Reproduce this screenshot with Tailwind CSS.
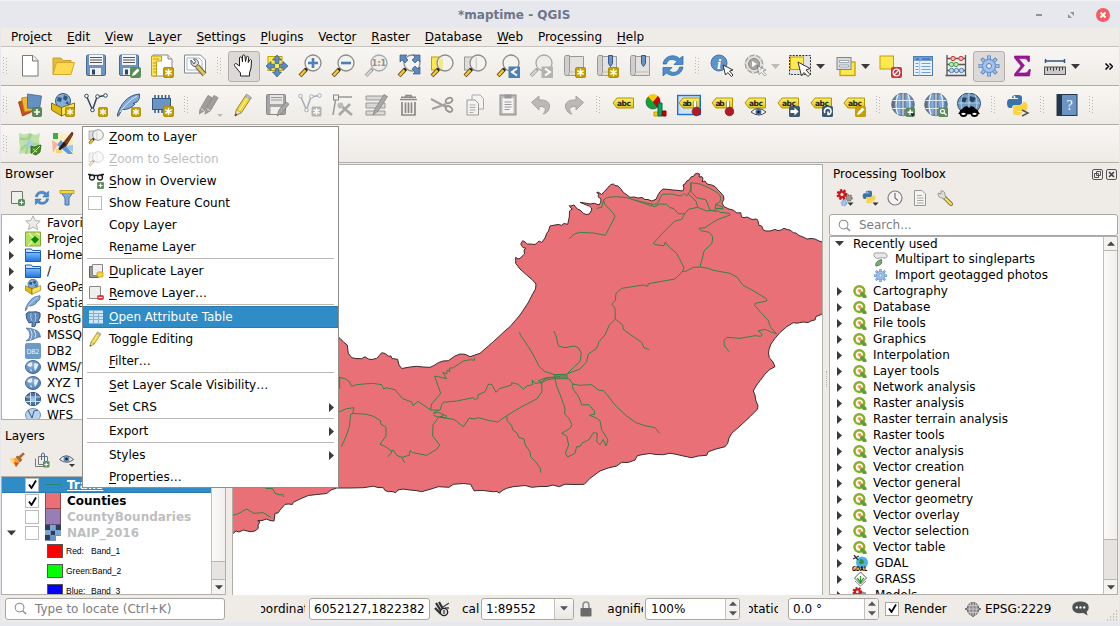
<!DOCTYPE html>
<html lang="en">
<head>
<meta charset="utf-8">
<title>*maptime - QGIS</title>
<script src="https://cdn.jsdelivr.net/npm/@tailwindcss/browser@4"></script>
</head>
<body class="w-[1120px] h-[626px] overflow-hidden bg-[#e6e8ed] text-[12px] leading-4 text-black font-['DejaVu_Sans',sans-serif]">

<svg class="absolute w-0 h-0">
  <defs>
    <linearGradient id="gY" x1="0" y1="0" x2="0" y2="1"><stop offset="0" stop-color="#fdf06a"/><stop offset="1" stop-color="#e0c41c"/></linearGradient>
    <linearGradient id="gB" x1="0" y1="0" x2="0" y2="1"><stop offset="0" stop-color="#7cbcfc"/><stop offset="1" stop-color="#1f72dd"/></linearGradient>
    <radialGradient id="gE" cx=".4" cy=".35" r=".7"><stop offset="0" stop-color="#8db4dc"/><stop offset="1" stop-color="#4a7aad"/></radialGradient>
    <linearGradient id="gW" x1="0" y1="0" x2="1" y2="0"><stop offset="0" stop-color="#5a5c60"/><stop offset=".35" stop-color="#7fb0e6"/><stop offset=".5" stop-color="#66696e"/><stop offset=".7" stop-color="#84b4ea"/><stop offset="1" stop-color="#4a6f9c"/></linearGradient>
  </defs>
  <!-- badges -->
  <symbol id="bStar" viewBox="0 0 11 11"><rect x=".5" y=".5" width="10" height="10" rx="1.500" fill="#c4a000" stroke="#b08f00"/><path d="M5.500 1.800v7.400M2.300 3.700l6.400 3.600M2.300 7.300l6.400-3.600" stroke="#fff" stroke-width="1.500"/></symbol>
  <symbol id="bStarG" viewBox="0 0 11 11"><rect x=".5" y=".5" width="10" height="10" rx="1.500" fill="#b4b2af"/><path d="M5.500 2v7M2.400 3.700l6.200 3.600M2.400 7.300l6.200-3.600" stroke="#fff" stroke-width="1.500"/></symbol>
  <symbol id="bPlus" viewBox="0 0 11 11"><rect x=".5" y=".5" width="10" height="10" rx="1.500" fill="#5a8c5a" stroke="#4b7d4f"/><path d="M5.500 2.300v6.400M2.300 5.500h6.400" stroke="#fff" stroke-width="1.800"/></symbol>
  <!-- files -->
  <symbol id="new" viewBox="0 0 24 24"><path d="M4.500 1.500h10.500l5 5v15.500h-15.500z" fill="#fff" stroke="#777"/><path d="M14.500 1.500v5.500h5.500" fill="#eee" stroke="#777"/></symbol>
  <symbol id="open" viewBox="0 0 24 24"><path d="M2 20V4h8l2 2.500h8V20z" fill="#e5bc3a" stroke="#c9a227"/><path d="M2 20.500L5.500 8.500h18L20 20.500z" fill="#fcd94f" stroke="#d3a92b"/></symbol>
  <symbol id="save" viewBox="0 0 24 24"><rect x="2.500" y="1" width="19" height="20.500" rx="1.500" fill="#6b94c4" stroke="#456a96"/><rect x="5" y="1" width="14" height="10" fill="#f5f5f5"/><path d="M6 3.500h12M6 6h12M6 8.500h12" stroke="#555"/><rect x="6" y="14" width="11" height="7" fill="#f0f0f0"/><rect x="8" y="15.500" width="3" height="5" fill="#2d4566"/></symbol>
  <symbol id="saveas" viewBox="0 0 24 24"><use href="#save"/><rect x="13" y="13" width="11" height="11" rx="2" fill="#5a8c5a"/><path d="M15 22l1-3 4.500-4.500 2 2-4.500 4.500z" fill="#fff"/></symbol>
  <symbol id="layout" viewBox="0 0 24 24"><path d="M3 1h15l4 4v17H3z" fill="#fff" stroke="#888"/><path d="M18 1v4h4" fill="#eee" stroke="#888"/><path d="M1.500 2h10v5h-5v15h-5z" fill="#fbe36a" stroke="#c4a000"/><path d="M3 5h6M3 9h3M3 12h3M3 15h3M3 18h3" stroke="#c4a000"/><use href="#bStar" x="13" y="13" width="11" height="11"/></symbol>
  <symbol id="layman" viewBox="0 0 24 24"><path d="M1.500 1h16l5 5v13h-21z" fill="#fff" stroke="#888"/><path d="M4 4h12l3 3v9H4z" fill="#fff" stroke="#9cb8e0"/><path d="M14 12l7.500 8.500" stroke="#6d6030" stroke-width="5"/><path d="M14 12l7.500 8.500" stroke="#d9c46a" stroke-width="3.200"/><path d="M8 6c-1 4 2 7 5 6.500l2.500-3c0-3-2-5-5-4.500l2 2.500-1.500 2.500z" fill="#ddd" stroke="#555"/></symbol>
  <symbol id="hand" viewBox="0 0 24 24"><path d="M8.500 22v-3L3.500 13c-2-2-1-3.500.5-3.500l3.500 2.500V4c0-1.500 2-1.500 2.500 0l.5 4V2c0-1.500 2.200-1.500 2.500 0l.5 5.500 1-4.500c.5-1.200 2.200-.8 2.200.5l-.5 5 1.500-2.500c.8-1 2-.3 1.800.8L19 14l-1.500 5v3z" fill="#fff" stroke="#222"/></symbol>
  <symbol id="pan" viewBox="0 0 24 24"><rect x="3" y="2.500" width="14" height="14" fill="#fce94f" stroke="#c4a000"/><g fill="#5b8bbf" stroke="#34577f" stroke-width=".7"><path d="M12 1l4.500 5h-2.700v3.500h-3.600V6H7.500zM12 23l4.500-5h-2.700v-3.500h-3.600V18H7.500zM1 12l5-4.500v2.700h3.500v3.600H6v2.700zM23 12l-5-4.500v2.700h-3.500v3.600H18v2.700z"/></g></symbol>
  <!-- magnifiers -->
  <symbol id="mag" viewBox="0 0 24 24"><path d="M8.500 15L2 21.800" stroke="#5a4a20" stroke-width="4"/><path d="M7.500 16l-5 5.500" stroke="#fcc62f" stroke-width="2.500"/><path d="M9.800 13.800L7.500 16" stroke="#222" stroke-width="2.500"/><circle cx="15" cy="9" r="8" fill="#f3f3ef" fill-opacity=".88" stroke="#8b8b88" stroke-width="1.300"/></symbol>
  <symbol id="magG" viewBox="0 0 24 24"><path d="M8.500 15L2 21.800" stroke="#999" stroke-width="3.500"/><path d="M7.500 16l-5 5.500" stroke="#d5d5d5" stroke-width="2"/><circle cx="15" cy="9" r="8" fill="#efedeb" stroke="#a9a7a5" stroke-width="1.300"/></symbol>
  <symbol id="zin" viewBox="0 0 24 24"><use href="#mag"/><path d="M15 4v10M10 9h10" stroke="#4e80b8" stroke-width="2.600"/></symbol>
  <symbol id="zout" viewBox="0 0 24 24"><use href="#mag"/><path d="M10 9h10" stroke="#4e80b8" stroke-width="2.600"/></symbol>
  <symbol id="z11" viewBox="0 0 24 24"><use href="#magG"/><text x="15" y="12" text-anchor="middle" font-size="8" font-weight="bold" fill="#8f8d8b" font-family="DejaVu Sans">1:1</text></symbol>
  <symbol id="zfull" viewBox="0 0 24 24"><use href="#mag"/><g fill="#5b8bbf" stroke="#34577f" stroke-width=".7"><path d="M3 1h7L8 3l3 3-3 3-3-3-2 2zM23 1h-7l2 2-3 3 3 3 3-3 2 2zM23 20h-7l2-2-3-3 3-3 3 3 2-2z"/></g></symbol>
  <symbol id="zsel" viewBox="0 0 24 24"><rect x="1.500" y="3" width="11" height="13" fill="#fce94f" stroke="#c4a000"/><use href="#mag"/><path d="M9 5h4v9H9z" fill="#f4e98a"/></symbol>
  <symbol id="zlay" viewBox="0 0 24 24"><rect x="1.500" y="3" width="11" height="13" fill="#ddd" stroke="#999"/><use href="#mag"/><path d="M13.500 3.500v12" stroke="#ccc"/></symbol>
  <symbol id="zlast" viewBox="0 0 24 24"><use href="#mag"/><rect x="12.500" y="12.500" width="11.500" height="11.500" fill="#4e80b8"/><path d="M21 14.500l-5 3.500 5 3.500" stroke="#fff" stroke-width="2" fill="none"/></symbol>
  <symbol id="znext" viewBox="0 0 24 24"><use href="#magG"/><rect x="12.500" y="12.500" width="11.500" height="11.500" fill="#b4b2af"/><path d="M16 14.500l5 3.500-5 3.500" stroke="#fff" stroke-width="2" fill="none"/></symbol>
  <symbol id="map0" viewBox="0 0 24 24"><path d="M6 2.500h15.500v19H6z" fill="#e3e2e0" stroke="#999"/><path d="M3.500 1.500h4v17q-2 3 0 3h-4q-1.500-1.500-1-3v-15z" fill="#d0cfcd" stroke="#999"/><path d="M7.500 18h14" stroke="#bbb"/></symbol>
  <symbol id="map1" viewBox="0 0 24 24"><use href="#map0"/><use href="#bStar" x="13" y="13" width="11" height="11"/></symbol>
  <symbol id="bm" viewBox="0 0 24 24"><use href="#map0"/><path d="M13.500 1.500h4v8l-2 3-2-3z" fill="#6b94c4" stroke="#345a8a"/></symbol>
  <symbol id="bmnew" viewBox="0 0 24 24"><use href="#bm"/><use href="#bStar" x="13" y="13" width="11" height="11"/></symbol>
  <symbol id="refresh" viewBox="0 0 24 24"><g fill="#4d8ccd" stroke="#2d659f" stroke-width=".7"><path d="M2 10C3 2 13-1 18.500 4.500L22 2v8.500h-9l3-3C12 4 6.500 5 5.500 10z"/><path d="M22 13C21 21 11 24 5.500 19L2 22v-8.500h9l-3 3c4 3.500 9.500 2 10.500-3.500z"/></g></symbol>
  <symbol id="cursor" viewBox="0 0 12 14"><path d="M1 1l2.500 10 2.300-2.500 3.700 4 1.500-1.500-3.500-4L11 6z" fill="#fff" stroke="#333"/></symbol>
  <symbol id="info" viewBox="0 0 24 24"><circle cx="9" cy="9" r="8" fill="#5f92c8" stroke="#4575ab"/><text x="9" y="14.500" text-anchor="middle" font-size="15" font-weight="bold" font-style="italic" fill="#fff" font-family="Liberation Serif">i</text><use href="#cursor" x="12" y="10" width="12" height="14"/></symbol>
  <symbol id="gearact" viewBox="0 0 24 24"><circle cx="11" cy="10" r="8.700" fill="#e4e2e0" stroke="#a9a7a5" stroke-width="1.500"/><circle cx="11" cy="10" r="8.700" fill="none" stroke="#e4e2e0" stroke-width="1.700" stroke-dasharray="2 4.830"/><circle cx="11" cy="10" r="5.500" fill="#a9a7a5" stroke="#888"/><path d="M9 7l5 3-5 3z" fill="#fff"/><use href="#cursor" x="13" y="10" width="11" height="14" opacity=".45"/></symbol>
  <symbol id="select" viewBox="0 0 24 24"><rect x="1.500" y="1.500" width="21" height="19" fill="#e4e4e4" stroke="#333" stroke-dasharray="2 1.200"/><rect x="2.500" y="3" width="13" height="12.500" fill="#fce94f" stroke="#c4a000"/><path d="M10 8l3.500 14 2.500-3.500 4 4 2-2-4-4.500 4-1.500z" fill="#fff" stroke="#333"/></symbol>
  <symbol id="selform" viewBox="0 0 24 24"><rect x="7" y="8" width="15" height="13.500" fill="#fce94f" stroke="#c4a000" stroke-width="1.300"/><rect x="4" y="3.500" width="14" height="12" fill="#d9dde0" stroke="#7b868c"/><path d="M6.500 6.500h9v2h-9zM6.500 11h9v2h-9z" fill="#fff" stroke="#8a969c" stroke-width=".8"/></symbol>
  <symbol id="desel" viewBox="0 0 24 24"><rect x="2" y="2" width="13.500" height="13" fill="#fce94f" stroke="#c4a000"/><rect x="13" y="13" width="11" height="11" rx="2" fill="#cf3239"/><circle cx="18.500" cy="18.500" r="3.300" fill="none" stroke="#fff" stroke-width="1.300"/><path d="M16 21l5-5" stroke="#fff" stroke-width="1.300"/></symbol>
  <symbol id="table" viewBox="0 0 24 24"><rect x="2.500" y="2.500" width="19" height="19" fill="#eaf2fb" stroke="#4e80b8"/><path d="M3 3h18v4H3z" fill="#6fa0d8"/><path d="M5 5h3M11 5h8" stroke="#2f5f9a"/><path d="M8.700 7v14.500" stroke="#a8c5e8"/><path d="M4.500 9.500h3M10.500 9.500h9M4.500 12.500h3M10.500 12.500h9M4.500 15.500h3M10.500 15.500h9M4.500 18.500h3M10.500 18.500h9" stroke="#6a9fdc"/></symbol>
  <symbol id="abacus" viewBox="0 0 24 24"><path d="M3 1v20M21.500 1v20M1.500 21.500h21M3 4.500h18M3 10.500h18M3 16.500h18" stroke="#555" fill="none" stroke-width="1.300"/><g stroke-width="1"><g fill="#f9b5b0" stroke="#c33"><circle cx="9" cy="4.500" r="2.200"/><circle cx="17" cy="4.500" r="2.200"/></g><g fill="#bfe8b8" stroke="#4a9a4a"><circle cx="7.500" cy="10.500" r="2.200"/><circle cx="12" cy="10.500" r="2.200"/></g><g fill="#bcd6f2" stroke="#4e80b8"><circle cx="7.500" cy="16.500" r="2.200"/><circle cx="12.500" cy="16.500" r="2.200"/><circle cx="17.500" cy="16.500" r="2.200"/></g></g></symbol>
  <symbol id="gear" viewBox="0 0 24 24"><path d="M12 1.500v21M1.500 12h21M4.600 4.600l14.800 14.800M19.400 4.600L4.600 19.400" stroke="#5183c0" stroke-width="3.600"/><path d="M12 2.300v19.400M2.300 12h19.400M5.200 5.200l13.600 13.600M18.800 5.200L5.200 18.800" stroke="#a5c3ea" stroke-width="2"/><circle cx="12" cy="12" r="6.600" fill="#a5c3ea" stroke="#6b98d4" stroke-width="1.300"/><circle cx="12" cy="12" r="2.500" fill="#e9e8e6" stroke="#5183c0"/></symbol>
  <symbol id="sigma" viewBox="0 0 24 24"><path d="M4.500 2h15v5.500h-1.500q-.5-3-4-3h-5.500l6 7-6.500 7.500h7q3 0 4-3.500h1.500l-1 6.500H4.500v-2l6.500-8-6.500-8z" fill="#a3129c" stroke="#7a0f75" stroke-width=".6"/></symbol>
  <symbol id="ruler" viewBox="0 0 24 24"><path d="M2.500 7h19M2.500 5v4M21.500 5v4" stroke="#2f5680" stroke-width="1.500"/><rect x="1.500" y="13" width="21" height="7.500" fill="#c9c9c9" stroke="#555"/><path d="M4.500 13v4M7.500 13v3M10.500 13v4M13.500 13v3M16.500 13v4M19.500 13v3" stroke="#444"/></symbol>
  <!-- layers and digitizing -->
  <symbol id="dsm" viewBox="0 0 24 24"><path d="M.5 9l10-3 3 13-9 4z" fill="#c2531d" stroke="#943a10" stroke-width=".8"/><path d="M3.500 5l12-2 1 14-10 2z" fill="#f2b52c" stroke="#b58116" stroke-width=".8"/><path d="M9.500 1l14 2-2 13-12-1z" fill="#6590c4" stroke="#3f6795" stroke-width=".8"/><use href="#bPlus" x="14" y="14" width="10" height="10"/></symbol>
  <symbol id="gpkg" viewBox="0 0 24 24"><circle cx="12" cy="8" r="7.500" fill="#84aed8" stroke="#35597f"/><path d="M7 4l4 1-1 4-4-1zM13 2l4 2-2 4-3-2zM14 10l3-2 1 4z" fill="#2f5680"/><path d="M.5 10l10 4.500V23L.5 17z" fill="#dfb90f" stroke="#6d5600" stroke-width=".8"/><path d="M23.500 10l-13 4.500V23l13-6z" fill="#fbe35a" stroke="#6d5600" stroke-width=".8"/></symbol>
  <symbol id="gpkgn" viewBox="0 0 24 24"><use href="#gpkg"/><use href="#bStar" x="14" y="14" width="10" height="10"/></symbol>
  <symbol id="vec" viewBox="0 0 24 24"><path d="M2.500 3l6 14L13 4l8-1.500" stroke="#34495e" fill="none" stroke-width="1.500"/><g fill="#fff" stroke="#34495e"><circle cx="2.500" cy="3" r="1.800"/><circle cx="8.500" cy="17" r="1.800"/><circle cx="13.500" cy="3.500" r="1.800"/><circle cx="21.500" cy="2.500" r="1.800"/></g></symbol>
  <symbol id="shp" viewBox="0 0 24 24"><use href="#vec"/><use href="#bStar" x="14" y="14" width="10" height="10"/></symbol>
  <symbol id="shpG" viewBox="0 0 24 24"><g opacity=".4"><use href="#vec"/></g><use href="#bStarG" x="13" y="13" width="11" height="11"/></symbol>
  <symbol id="feather" viewBox="0 0 24 24"><path d="M0 23C3 12 10 2 22.500 1c.5 3-.5 6-2.500 8l-4 1.500 2 .5c-3 3.500-8 6-13 5.500L1.500 23z" fill="#7fa9d8" stroke="#35597f"/><path d="M3 19C8 12 13 7 20 3" stroke="#dbe9f7" fill="none"/></symbol>
  <symbol id="spl" viewBox="0 0 24 24"><use href="#feather"/><use href="#bStar" x="14" y="14" width="10" height="10"/></symbol>
  <symbol id="chip" viewBox="0 0 24 24"><path d="M5 2v18M8.500 2v18M12 2v18M15.500 2v18M19 2v18" stroke="#34577f" stroke-width="1.500"/><rect x="2.500" y="5.500" width="18" height="11" fill="#6b94c4" stroke="#34577f"/><use href="#bStar" x="13" y="13" width="11" height="11"/></symbol>
  <symbol id="penG" viewBox="0 0 24 24"><path d="M2 22l1.500-6L12 1.500l4.500 2.500L8 18.500z" fill="#a09e9c" stroke="#868482" stroke-width=".8"/><path d="M4 16l4 2.500" stroke="#e5e3e1"/></symbol>
  <symbol id="pens" viewBox="0 0 24 24"><use href="#penG" x="-2" y="0" width="22" height="24"/><use href="#penG" x="4" y="0" width="22" height="24"/><path d="M18 21h6l-3 3z" fill="#bbb"/></symbol>
  <symbol id="pen" viewBox="0 0 24 24"><path d="M3 23l1.500-6.500L14 2l5 3-9.500 14.500z" fill="#f3d83c" stroke="#8a7a2a" stroke-width=".9"/><path d="M3 23l1.500-6.500 5 3z" fill="#eed9b0" stroke="#8a7a2a" stroke-width=".6"/><path d="M13 3.500l5 3 1.500-2-5-3.500z" fill="#b9b9c5" stroke="#888" stroke-width=".6"/><path d="M3 23l.8-2.500 1.500 1z" fill="#222"/><path d="M7 18L15.500 4.500" stroke="#fff3a0"/></symbol>
  <symbol id="saveG" viewBox="0 0 24 24"><rect x="1.500" y="1.500" width="19" height="20" rx="1" fill="#a6a4a2" stroke="#8b8987"/><rect x="5" y="2" width="13" height="9" fill="#e8e6e4"/><path d="M6 4.500h11M6 7h11" stroke="#999"/><rect x="5.500" y="14" width="10" height="7" fill="#eee"/><path d="M12 23l2-6 7-8 3 2-7 9z" fill="#aaa8a6" stroke="#7b7977" stroke-width=".7"/></symbol>
  <symbol id="vertex" viewBox="0 0 24 24"><path d="M5 4h16M5 4l-3 18M5 4" stroke="#9a9896" stroke-width="1.500" fill="none"/><rect x="2.500" y="2" width="5" height="5" fill="#eee" stroke="#888"/><path d="M8 22L19 11M9 12l12 10" stroke="#a8a6a4" stroke-width="2.600"/><circle cx="9.500" cy="12.500" r="3" fill="#bbb"/></symbol>
  <symbol id="multi" viewBox="0 0 24 24"><path d="M2 3h19v4H2zM2 10h19v5H2zM2 18h19v4H2z" fill="#dad8d6" stroke="#999"/><path d="M9 22l2-6L20 1.500l3.500 2L14 18z" fill="#aaa8a6" stroke="#868482" stroke-width=".8"/></symbol>
  <symbol id="trash" viewBox="0 0 24 24"><path d="M3 6.500h17M9 4V2.500h5V4M4 4.300h15" stroke="#8b8987" stroke-width="1.600" fill="none"/><path d="M5 9v13h13V9M8.500 9.500V20M11.500 9.500V20M14.500 9.500V20" stroke="#8b8987" stroke-width="1.700" fill="none"/></symbol>
  <symbol id="cut" viewBox="0 0 24 24"><path d="M1 6l15 8M2 16l14-5" stroke="#a3a19f" stroke-width="2"/><g fill="none" stroke="#949290" stroke-width="1.700"><ellipse cx="19" cy="7.500" rx="3.500" ry="2.500" transform="rotate(-25 19 7.500)"/><ellipse cx="19" cy="16" rx="3.500" ry="2.500" transform="rotate(35 19 16)"/></g></symbol>
  <symbol id="copy" viewBox="0 0 24 24"><path d="M9 2h8l3.500 3.500V16H9z" fill="#f4f3f2" stroke="#aaa"/><path d="M4 7h8l3.500 3.500V22H4z" fill="#f4f3f2" stroke="#999"/><path d="M6.500 12h6M6.500 14.500h6M6.500 17h6M6.500 19.500h4" stroke="#aaa"/></symbol>
  <symbol id="paste" viewBox="0 0 24 24"><rect x="4" y="2" width="16" height="20" fill="#bdbbb9" stroke="#8f8d8b"/><path d="M6.500 5h11v15h-11z" fill="#f6f5f4"/><path d="M8.500 1.500h7v4h-7z" fill="#999"/><path d="M8.500 9h7M8.500 11.500h7M8.500 14h7M8.500 16.500h5" stroke="#999"/></symbol>
  <symbol id="undo" viewBox="0 0 24 24"><path d="M2.500 9.500L10 3v4c8-.5 12 3 10 9-1 3-4 5-6 5 4-4 3-8-4-7.500v3.500z" fill="#bbb9b7" stroke="#a5a3a1"/></symbol>
  <symbol id="redo" viewBox="0 0 24 24"><g transform="translate(24 0) scale(-1 1)"><use href="#undo"/></g></symbol>
  <!-- labels -->
  <symbol id="tag" viewBox="0 0 24 24"><path d="M2 10l4-5h16.500v10H6z" fill="url(#gY)" stroke="#b59300"/></symbol>
  <symbol id="abc" viewBox="0 0 24 24"><use href="#tag"/><text x="6" y="13" font-size="7.500" font-weight="bold" textLength="14" fill="#222" font-family="DejaVu Sans">abc</text></symbol>
  <symbol id="diag" viewBox="0 0 24 24"><circle cx="9" cy="9" r="7" fill="#0aa53a" stroke="#333" stroke-width=".6"/><path d="M9 9L4 3.500a7.500 7.500 0 0 1 10-.5z" fill="#fc0"/><path d="M9 9l5-6c3 3 3 8-1 11.500z" fill="#c00"/><path d="M10 19h4v4h-4z" fill="#fc0" stroke="#c90"/><path d="M14 10h4v13h-4z" fill="#0a6" stroke="#064"/><path d="M18.500 18h3.500v5h-3.500z" fill="#c00" stroke="#800"/></symbol>
  <symbol id="ab" viewBox="0 0 24 24"><use href="#tag"/><text x="5.500" y="13" font-size="7.500" font-weight="bold" textLength="9" fill="#222" font-family="DejaVu Sans">ab</text><path d="M18 8v9" stroke="#888" stroke-width="3.500"/><path d="M18 8v9" stroke="#fff" stroke-width="2"/><circle cx="19.500" cy="18.500" r="4.300" fill="#b01c22" stroke="#7c1014" stroke-width=".7"/></symbol>
  <symbol id="abbox" viewBox="0 0 24 24"><rect x=".7" y="2.500" width="22.600" height="19" fill="#cfe2f7" stroke="#1a6fd8" stroke-width="1.400"/><use href="#ab"/></symbol>
  <symbol id="abeye" viewBox="0 0 24 24"><use href="#abc"/><path d="M8 19q7-7 15 0q-7 6-15 0z" fill="#fff" stroke="#444"/><circle cx="15.500" cy="19" r="3" fill="#3f6fa8"/><circle cx="15.500" cy="19" r="1.200" fill="#111"/></symbol>
  <symbol id="abmove" viewBox="0 0 24 24"><use href="#abc"/><rect x="13" y="13" width="11" height="11" rx="1.500" fill="#3b5a70"/><path d="M14.500 17h4v-2.500l4 4-4 4V20h-4z" fill="#fff"/></symbol>
  <symbol id="abrot" viewBox="0 0 24 24"><use href="#abc"/><rect x="13" y="13" width="11" height="11" rx="1.500" fill="#3b5a70"/><path d="M16 20a3.300 3.300 0 1 1 3 1.500l0-3" stroke="#fff" stroke-width="1.600" fill="none"/></symbol>
  <symbol id="abedit" viewBox="0 0 24 24"><use href="#abc"/><rect x="13" y="13" width="11" height="11" rx="1.500" fill="#c4a000"/><path d="M15 22l1-3 4.500-4.500 2 2-4.500 4.500z" fill="#fff"/></symbol>
  <symbol id="globe" viewBox="0 0 24 24"><circle cx="12" cy="11.500" r="11.300" fill="url(#gW)" stroke="#6d7887"/><path d="M1.500 7.500h21M1.500 15.500h21M12 .5v22" stroke="#dfe9f4" stroke-width="1.200" fill="none"/><path d="M7 1.500q-4 10 0 20M17 1.500q4 10 0 20" stroke="#f1f6fc" stroke-width="1.200" fill="none"/></symbol>
  <symbol id="gl1" viewBox="0 0 24 24"><use href="#globe"/><use href="#bPlus" x="14.500" y="14.500" width="9.500" height="9.500"/><path d="M19 20.500h5l-2.500 3z" fill="#222"/></symbol>
  <symbol id="gl2" viewBox="0 0 24 24"><use href="#globe"/><rect x="14.500" y="14.500" width="9.500" height="9.500" rx="1" fill="#5a8c5a"/><circle cx="18.500" cy="18.300" r="2" fill="none" stroke="#fff" stroke-width="1.200"/><path d="M20 19.800l2.500 2.500" stroke="#fff" stroke-width="1.300"/></symbol>
  <symbol id="gl3" viewBox="0 0 24 24"><ellipse cx="12" cy="10.500" rx="11.500" ry="10.500" fill="#6f9bc4" stroke="#33506e"/><path d="M5 4l5 1-2 5-4-2zM13 3l6 2-3 5-4-3z" fill="#29435e"/><path d="M1 10h22M12 0v21M6 2q-4 8 0 17M18 2q4 8 0 17" stroke="#cfe0f0" stroke-width=".7" fill="none"/><path d="M7 14l3-1 2 2 2-2 3 1 6 7H1z" fill="#000"/><circle cx="6.500" cy="20" r="4" fill="#000"/><circle cx="17.500" cy="20" r="4" fill="#000"/><path d="M4 21q2.500-2.500 5 0-2.500 2-5 0zM15 21q2.500-2.500 5 0-2.500 2-5 0z" fill="#fff"/></symbol>
  <symbol id="py" viewBox="0 0 24 24"><path d="M11 2c5 0 5 1 5 3v4q0 3-3 3H9q-3 0-3 3H4q-3 0-3-5 0-4 3-4h8V5H6c0-2 1-3 5-3z" fill="#3a73a8"/><path d="M12 22c-5 0-5-1-5-3v-4q0-3 3-3h4q3 0 3-3h1.500q3 0 3 5 0 4-3 4H11v1h5c0 2-1 3-4 3z" fill="#fdd23f"/><circle cx="8.500" cy="4" r="1" fill="#fff"/></symbol>
  <symbol id="pycon" viewBox="0 0 24 24"><use href="#py"/><path d="M16 17l6 3-6 3" stroke="#555" stroke-width="1.500" fill="none"/></symbol>
  <symbol id="book" viewBox="0 0 24 24"><rect x="2" y="1.500" width="20" height="21" fill="#6b94c4" stroke="#26384f"/><rect x="2" y="1.500" width="5" height="21" fill="#243648"/><text x="14.500" y="17" text-anchor="middle" font-size="14" fill="#fff" font-family="Liberation Serif">?</text></symbol>
  <symbol id="osm" viewBox="0 0 24 24"><path d="M1 1l5 1.500L12 1l5 2 5-2-1 7 1 6-1 8-6-1-5 1-5-1-4 1 1-7-1-6z" fill="#bfe0a8"/><path d="M2 6q8 4 10-4M3 18q6-9 18-5M8 22q1-8 5-20" stroke="#a4cf8c" stroke-width="2" fill="none"/><path d="M10 7q6 2 6 8-4 3-8 0 3-4 2-8z" fill="#a8cfe0"/></symbol>
  <symbol id="osm1" viewBox="0 0 24 24"><use href="#osm"/><path d="M13 14l3 1 7-2-1 7-4 3-5-2z" fill="#4c8c2b" stroke="#2c5c12" stroke-width=".8"/><path d="M14 22l8-8M15 17l4 3" stroke="#cfe6a0"/></symbol>
  <symbol id="osm2" viewBox="0 0 24 24"><path d="M2 1h8l12 3v18l-5-1-5 1-6-1-5 1z" fill="#fbeec6"/><path d="M2 1h5v6H2z" fill="#35b04a"/><path d="M10 8l12 14h-5L6 13z" fill="#5a9ae0"/><path d="M1 8l6 4-5 9z" fill="#f3b4a4"/><path d="M14 14l8-1v7z" fill="#9ac7ee"/><path d="M5 17h6v4H5z" fill="#f3d47a"/><path d="M21 0q2 1 0 4l-6 10-4 2 2-6z" fill="#8a3b1b" stroke="#4c1d0a" stroke-width=".7"/><path d="M12.500 10l3 2-6 6q-2 0-2-1.500z" fill="#2a1a12"/></symbol>
  <!-- small -->
  <symbol id="addlayer" viewBox="0 0 16 16"><path d="M2.500 1.500h11v12h-11z" fill="#efefec" stroke="#6b7a6b"/><rect x="9" y="9" width="7" height="7" rx="2" fill="#5a8c5a"/><path d="M12.500 10.500v4M10.500 12.500h4" stroke="#fff"/></symbol>
  <symbol id="filter" viewBox="0 0 16 16"><path d="M1 1h14l-5 7v7H6V8z" fill="#7fa9d8" stroke="#4a75a6"/><path d="M1 .5h14v3H1z" fill="#f3d83c" stroke="#b59300" stroke-width=".7"/></symbol>
  <symbol id="star" viewBox="0 0 16 16"><path d="M8 .8l2.200 4.700 5 .5-3.700 3.500 1 5.200L8 12l-4.500 2.700 1-5.200L.8 6l5-.5z" fill="#edecea" stroke="#b3b3a8"/></symbol>
  <symbol id="proj" viewBox="0 0 16 16"><path d="M.5 1h15v14H.5z" fill="#b8e05a" stroke="#7fa838"/><path d="M3 15L9 8 4 2M11 2l4 2" stroke="#fff" fill="none"/><path d="M10 5l4 3.500-4 4-4-4z" fill="#0a8a0a"/></symbol>
  <symbol id="folder" viewBox="0 0 16 16"><path d="M.5 14V2h6l1 1.500h8V14z" fill="#cfe3fa" stroke="#1a5fb4"/><path d="M.5 5.500h15V14.500H.5z" fill="url(#gB)" stroke="#1c5fb5"/></symbol>
  <symbol id="pg" viewBox="0 0 16 16"><path d="M1 3q2-3 6-2 5-1 8 1 1 4-2 8l2 1-3 1-1-1q0 4-2 5H7V11L4 12Q1 8 1 3z" fill="#5f89b8" stroke="#34577f"/><path d="M6 2q-1 5 1 8M10 2q2 5 0 9" stroke="#cfe0f2" fill="none" stroke-width=".7"/></symbol>
  <symbol id="mssql" viewBox="0 0 16 16"><path d="M1 1q4 3 4 7t-4 6q7-1 10-3 3-1 4.500-1-1-6-5-7Q6 1 1 1z" fill="#6b94c4" stroke="#456a96" stroke-width=".7"/><path d="M5 2q4 6 0 11M9 3q3 5 1 8" stroke="#dce8f4" fill="none"/></symbol>
  <symbol id="db2" viewBox="0 0 16 16"><rect x="0" y="0" width="16" height="16" rx="2" fill="#6b9ac8"/><text x="8" y="10.500" text-anchor="middle" textLength="13" font-size="6.500" fill="#eef4fb" font-family="DejaVu Sans">DB2</text></symbol>
  <symbol id="wms" viewBox="0 0 16 16"><ellipse cx="8" cy="8" rx="7.500" ry="6.500" fill="url(#gE)" stroke="#456a96"/><path d="M2.500 5l4-2 1 3-2 2-3-1zM9.500 4l4 1-1.500 4-2 3-1-4zM5 10l2 1-1 2z" fill="#e6eff8"/></symbol>
  <symbol id="wcs" viewBox="0 0 16 16"><ellipse cx="8" cy="8" rx="7.500" ry="6.500" fill="#4a76a8" stroke="#28486c"/><path d="M1 6h14M1 10.500h14M5.500 2v12M10.500 2v12" stroke="#dfeaf5" stroke-width=".9"/><path d="M6 6.500h4v3.500H6z" fill="#9fc3e8"/></symbol>
  <symbol id="wfs" viewBox="0 0 16 16"><ellipse cx="8" cy="8" rx="7.500" ry="6.500" fill="#b9d2ea" stroke="#6c93bb"/><path d="M3 3l4 8 2-7 4-1" stroke="#345a8a" fill="none"/></symbol>
  <symbol id="brush" viewBox="0 0 16 16"><path d="M1 7l6-1 4 4-4 5z" fill="#f6a23a"/><path d="M1 7l4-1 1 8z" fill="#fbd94e"/><path d="M5 10l5 1-3 4z" fill="#d94f3a"/><path d="M7 5l4 5 2-2-1.500-2L15.500 2 14 .8 10 4.500 8.500 4z" fill="#b56a2a" stroke="#8d4d18" stroke-width=".5"/></symbol>
  <symbol id="group" viewBox="0 0 16 16"><path d="M1.500 6.500v8h8M4.500 4.500h9v8h-9z" fill="none" stroke="#777"/><path d="M7.500 8V3q0-2 1.500-2t1.500 2v7" stroke="#456a96" fill="none"/><rect x="9" y="9" width="6.500" height="6.500" rx="1.500" fill="#5a8c5a"/><path d="M12.200 10.500v4M10.300 12.400h4" stroke="#fff"/></symbol>
  <symbol id="eye" viewBox="0 0 16 16"><path d="M.5 7.500Q7 0 14.500 7.500 8 13 .5 7.500z" fill="#f0f3f6" stroke="#555"/><circle cx="7.500" cy="7" r="3" fill="#5f89b8"/><circle cx="7.500" cy="7" r="1.300" fill="#222"/><path d="M10 12h6l-3 3z" fill="#333"/></symbol>
  <symbol id="glasses" viewBox="0 0 16 16"><path d="M0 1.500h3M13 1.500h3M1 2.500h14" stroke="#222" stroke-width="1.300"/><circle cx="4" cy="4.500" r="2.500" fill="#eee" stroke="#222" stroke-width="1.300"/><circle cx="12" cy="4.500" r="2.500" fill="#eee" stroke="#222" stroke-width="1.300"/><use href="#bPlus" x="9" y="9" width="7" height="7"/></symbol>
  <symbol id="dup" viewBox="0 0 16 16"><path d="M1.500 3.500h9v11h-9z" fill="#999" stroke="#666"/><path d="M4.500 1.500h10v11h-10z" fill="#f0f0ee" stroke="#888"/><rect x="9" y="9" width="6" height="5" rx="1" fill="#f3d83c" stroke="#b59300" stroke-width=".7"/></symbol>
  <symbol id="rem" viewBox="0 0 16 16"><path d="M1.500 1.500h11v12h-11z" fill="#efefec" stroke="#888"/><rect x="9" y="10" width="7" height="5" rx="2" fill="#e8383d"/><path d="M10.500 12.500h4" stroke="#fff"/></symbol>
  <symbol id="tblw" viewBox="0 0 16 16"><rect x="1" y="1.500" width="14" height="13" fill="#d3e4f2"/><path d="M1 4.500h14M1 7.500h14M1 10.500h14M5.500 1.500v13M10.500 5v10" stroke="#86b1d6"/></symbol>
  <symbol id="multip" viewBox="0 0 16 16"><path d="M2 1h10q4 1 3 4-2 3-5 1L4 7Q-1 4 2 1z" fill="#e8e8e6" stroke="#999"/><path d="M3 15q-1-5 6-7 2 6-6 7z" fill="#79b079" stroke="#4b7d4f"/></symbol>
  <symbol id="q" viewBox="0 0 16 16"><circle cx="7.800" cy="7.500" r="5.200" fill="#fff" stroke="#8bad2a" stroke-width="2.700"/><path d="M8.500 8h2.500l4.500 4.500V15H12L8.500 11z" fill="#5f9f33"/><path d="M6 5.500l3.500-.2 1 3-2 1.700-2.500-2z" fill="#f7b56a"/><circle cx="8.300" cy="7.600" r="1.200" fill="#ea8a2a"/></symbol>
  <symbol id="gdal" viewBox="0 0 16 16"><circle cx="10" cy="7.500" r="6" fill="#4cb4dc"/><path d="M8 4q4 0 4 4-3 2-5 0z" fill="#3a8a3a"/><path d="M1 4l6-3M2 0l4 5" stroke="#333" stroke-width="1.300"/><text x="0" y="15.500" font-size="6.500" font-weight="bold" textLength="15" lengthAdjust="spacingAndGlyphs" fill="#000" font-family="DejaVu Sans">GDAL</text></symbol>
  <symbol id="grass" viewBox="0 0 16 16"><path d="M8.500 1l6 6-6 6-6-6z" fill="#fff" stroke="#555"/><path d="M3 10l5.500 5 5.500-5" stroke="#888" fill="none"/><path d="M8.500 12V5M8.500 12Q6.500 8 5 7M8.500 12q2-4 3.500-5" stroke="#2a9a2a" fill="none" stroke-width="1.200"/></symbol>
  <symbol id="gearsR" viewBox="0 0 18 18"><circle cx="6" cy="5.500" r="4" fill="#d62020" stroke="#c01818" stroke-width="3" stroke-dasharray="2 1.300"/><circle cx="6" cy="5.500" r="1.500" fill="#fff"/><circle cx="13" cy="9" r="3" fill="#999" stroke="#777" stroke-width="1.500" stroke-dasharray="1.500 1"/><circle cx="8" cy="14" r="2.600" fill="#a5c3ea" stroke="#7ea6d8" stroke-width="1.500" stroke-dasharray="1.500 1"/><path d="M11.500 13.500h6l-3 3.200z" fill="#333"/></symbol>
  <symbol id="pyS" viewBox="0 0 18 18"><use href="#py" x="1" y="0" width="15" height="16"/><path d="M11.500 13.500h6l-3 3.200z" fill="#333"/></symbol>
  <symbol id="clock" viewBox="0 0 16 16"><circle cx="8" cy="8" r="7" fill="#f4f3f1" stroke="#808080" stroke-width="1.200"/><path d="M8 3v5l3 2.500" stroke="#707070" fill="none" stroke-width="1.200"/></symbol>
  <symbol id="doc" viewBox="0 0 16 16"><path d="M2.500.5h7.500l3.500 3.500v11.500h-11z" fill="#f4f3f2" stroke="#999"/><path d="M5 5.500h5M5 8h6.500M5 10.500h6.500M5 13h6.500" stroke="#aaa"/></symbol>
  <symbol id="wrench" viewBox="0 0 16 16"><path d="M7 7l7 7" stroke="#8a7a2a" stroke-width="4" stroke-linecap="round"/><path d="M8 8l6 6" stroke="#f3dc76" stroke-width="2.200" stroke-linecap="round"/><path d="M1 3l3 1V.8Q8 .5 8 5l1 2-2 2-2-1Q1 8 1 3z" fill="#ddd" stroke="#888" stroke-width=".8"/></symbol>
  <symbol id="search" viewBox="0 0 14 14"><circle cx="6" cy="6" r="4.700" fill="none" stroke="#8a8a8a" stroke-width="1.100"/><path d="M9.300 9.500L13 13" stroke="#8a8a8a" stroke-width="1.400"/></symbol>
  <symbol id="mouse" viewBox="0 0 16 16"><path d="M2 2l5 8M5 1l4 7M1 7l6 6" stroke="#333" stroke-width="2.300"/><circle cx="10" cy="11" r="3.700" fill="#ddd" stroke="#222" stroke-width="1.300"/><path d="M9 6l6-4M11 7l4 0M10 9v4" stroke="#444" stroke-width="1.300"/></symbol>
  <symbol id="lock" viewBox="0 0 12 16"><path d="M3 8V4.500q0-3.500 3-3.500t3 3.500V8" fill="none" stroke="#8f8f8f" stroke-width="1.600"/><rect x=".5" y="7" width="11" height="8.500" rx="1" fill="#6a6a6a"/></symbol>
  <symbol id="crs" viewBox="0 0 16 16"><ellipse cx="8" cy="8" rx="5.800" ry="6.500" fill="#8d8d8d" stroke="#5c5c5c"/><path d="M0 8h16M3 4.500h10M3 11.500h10M8 1v14M5.500 2q-2 6 0 12M10.500 2q2 6 0 12" stroke="#d5d5d5" stroke-width=".7" fill="none"/><path d="M0 8h2M14 8h2M8 15l0 1" stroke="#555" stroke-width="1.500"/></symbol>
  <symbol id="balloon" viewBox="0 0 16 16"><path d="M8 1.500c4.500 0 7.700 2 7.700 5.500 0 2-1 3.300-2 4l1 3.500-4-2.200C4 13 .3 11 .3 7 .3 3.500 3.500 1.500 8 1.500z" fill="#4f5052"/><circle cx="4.500" cy="7" r="1.100" fill="#fff"/><circle cx="8" cy="7" r="1.100" fill="#fff"/><circle cx="11.500" cy="7" r="1.100" fill="#fff"/></symbol>
  <symbol id="naip" viewBox="0 0 16 16"><path d="M0 0h16v16H0z" fill="#6b94c4"/><path d="M5 0h5v5H5zM0 5h5v5H0zM10 5h6v5h-6z" fill="#7fa6d2"/><path d="M0 0h5v5H0zM6 6h4v4H6zM11 0h5v5h-5zM0 10h5v5H0z" fill="#2c3e50"/><path d="M11 11h5v5h-5z" fill="#fff"/></symbol>
</svg>

<div class="flex flex-col w-full h-full">
  <!-- title bar -->
  <header class="h-7 shrink-0 flex items-center border-t border-[#f1f2f5]">
    <div class="w-[906px] pl-[458px] font-bold text-[#6e7689] whitespace-pre">*maptime - QGIS</div>
    <div class="flex items-center">
      <span class="ml-[130px] w-[6px] h-[2px] bg-[#8e929c]"></span>
      <svg class="ml-[26px] w-[6px] h-[6px]" viewBox="0 0 6 6"><path d="M2 0h4v4zM0 2v4h4z" fill="#8e929c"/></svg>
      <svg class="ml-[22px] w-[14px] h-[14px]" viewBox="0 0 14 14"><circle cx="7" cy="7" r="7" fill="#fa5b60"/><path d="M4.500 4.500l5 5M9.500 4.500l-5 5" stroke="#fff" stroke-width="2"/></svg>
    </div>
  </header>

  <div class="flex flex-col h-[594px] shrink-0 ml-px mr-px bg-[#efebe7]">
    <nav id="menubar" class="h-[19px] shrink-0 flex items-center gap-[14.8px] pl-[10px] border-b border-[#c6c3bf]"></nav>
    <div id="tb1" class="h-[39px] shrink-0 flex items-center border-b border-[#b1aeaa] bg-linear-to-b from-[#f8f6f3] to-[#eeebe6]"></div>
    <div id="tb2" class="h-[39px] shrink-0 flex items-center border-b border-[#b1aeaa] bg-linear-to-b from-[#f8f6f3] to-[#eeebe6]"></div>
    <div id="tb3" class="h-[38px] shrink-0 flex items-center border-b border-[#b1aeaa] bg-linear-to-b from-[#f8f6f3] to-[#eeebe6]"></div>

    <div class="h-[432px] shrink-0 flex">
      <!-- left docks -->
      <aside class="w-[225px] shrink-0 flex flex-col">
        <div class="h-[22px] pl-1 flex items-center">Browser</div>
        <div class="h-[29px] pl-2 pb-1 flex items-center gap-[9px]">
          <svg class="size-4"><use href="#addlayer"/></svg>
          <svg class="size-4"><use href="#refresh"/></svg>
          <svg class="size-4"><use href="#filter"/></svg>
        </div>
        <div id="browser" class="h-[206px] shrink-0 overflow-hidden bg-white border border-[#b1aeaa]"></div>
        <div class="h-[32px] pl-1 flex items-center">Layers</div>
        <div class="h-[22px] pl-2 mb-[3px] flex items-center gap-[9px] -mt-[3px]">
          <svg class="size-4"><use href="#brush"/></svg>
          <svg class="size-4"><use href="#group"/></svg>
          <svg class="size-4"><use href="#eye"/></svg>
        </div>
        <div class="mt-[2px] h-[119px] flex overflow-hidden bg-white border border-[#b1aeaa]">
          <div class="flex-1 flex flex-col">
            <div class="h-4 shrink-0 flex items-center bg-[#308cc6] border-b border-[#2a7bae]">
              <span class="ml-[23px] size-[14px] bg-white border border-[#bbb] flex items-center justify-center"><svg class="size-[9px]" viewBox="0 0 9 9"><path d="M1 4.500l2.500 3.500L8 .5" stroke="#000" stroke-width="1.800" fill="none"/></svg></span>
              <span class="ml-[6px] w-4 h-px bg-[#1f8a70]"></span>
              <span class="ml-[6px] font-bold text-white underline">Trails</span>
            </div>
            <div class="h-4 shrink-0 flex items-center">
              <span class="ml-[23px] size-[14px] bg-white border border-[#bbb] flex items-center justify-center"><svg class="size-[9px]" viewBox="0 0 9 9"><path d="M1 4.500l2.500 3.500L8 .5" stroke="#000" stroke-width="1.800" fill="none"/></svg></span>
              <span class="ml-[6px] size-4 bg-[#e97077] border-x border-b border-[#96474c]"></span>
              <span class="ml-[6px] font-bold">Counties</span>
            </div>
            <div class="h-4 shrink-0 flex items-center">
              <span class="ml-[23px] size-[14px] bg-white border border-[#bbb]"></span>
              <span class="ml-[6px] size-4 bg-[#987db7] border-x border-b border-[#625076]"></span>
              <span class="ml-[6px] font-bold text-[#bebebe]">CountyBoundaries</span>
            </div>
            <div class="h-4 shrink-0 flex items-center">
              <svg class="ml-1 w-[11px] h-[6px]" viewBox="0 0 11 6"><path d="M1 .5h9L5.500 5.500z" fill="#3b3b3b"/></svg>
              <span class="ml-[8px] size-[14px] bg-white border border-[#bbb]"></span>
              <svg class="ml-[6px] size-4"><use href="#naip"/></svg>
              <span class="ml-[6px] font-bold text-[#bebebe]">NAIP_2016</span>
            </div>
            <div class="h-5 shrink-0 flex items-center font-['Liberation_Sans',sans-serif] text-[8.500px] leading-[10px]"><span class="ml-[45px] w-4 h-[14px] bg-[#f00] border border-[#555]"></span><span class="ml-[3px] w-[25px]">Red:</span>Band_1</div>
            <div class="h-5 shrink-0 flex items-center font-['Liberation_Sans',sans-serif] text-[8.500px] leading-[10px]"><span class="ml-[45px] w-4 h-[14px] bg-[#0f0] border border-[#555]"></span><span class="ml-[3px] w-[26px]">Green:</span>Band_2</div>
            <div class="h-5 shrink-0 flex items-center font-['Liberation_Sans',sans-serif] text-[8.500px] leading-[10px]"><span class="ml-[45px] w-4 h-[14px] bg-[#00f] border border-[#555]"></span><span class="ml-[3px] w-[25px]">Blue:</span>Band_3</div>
          </div>
          <div class="w-[14px] flex flex-col border-l border-[#c3c0bc] bg-[#e6e3e0]">
            <div class="h-[85px] bg-linear-to-r from-[#fbfaf9] to-[#f1efed] border-b border-[#b9b6b2]"></div>
            <div class="h-[18px] border-b border-[#b9b6b2]"></div>
            <div class="flex-1 bg-[#f5f3f1] flex items-center justify-center"><svg class="w-2 h-[5px]" viewBox="0 0 8 5"><path d="M0 .3h8L4 4.600z" fill="#444"/></svg></div>
          </div>
        </div>
      </aside>

      <!-- map canvas -->
      <main class="ml-[6px] w-[591px] h-[431px] mt-px shrink-0 border border-[#b1aeaa] border-b-0 bg-white overflow-hidden">
        <svg class="w-[589px] h-[430px]" viewBox="233 165 589 430">
          <path fill="#e97077" stroke="#3c2a2c" stroke-width="1" stroke-linejoin="round" d="M826 242L822 242 819 241 817 240 815 239 811 238.500 807 239 803 237 799 235.500 796 233 793.300 232.700 790 230 787 229.500 784 228.300 781 230 778 230.700 775 229.500 770 231 766 231 763.300 230 761.700 226 759 225.500 758 221 756.700 219 752 219.500 747 217 744 217.700 741.500 217 740.700 212.700 737 213 733 210 729 209 724 206.700 722 203 724 199 723.300 195.700 721 193 718 190 715 186.500 711.700 185 707 184 705 181 702 181.700 703 179 702 176.700 699 177 699.500 174 697.300 173.300 695 174 694 176 691 177 689 180 686.700 181 685 184 683 185 684 188 682.700 191 679 190.500 673 190 669 189.500 663 189 660 191.700 658 195 656 199.300 651.700 201 648 199.500 645 199.500 642 197.500 638 198 634 197 630 197.300 627 195 623.300 192.300 621 189 618 186 615 185.500 613.300 184 611 184.500 608 187.300 606 190 604 191.700 601.700 194.500 598 192 596.700 192.700 599 194 598 196.700 601 199 600.700 202.300 599 205 594.300 203.300 590 204 586.700 203.300 580 202.300 585 204.500 589.300 206 591.500 208 591.700 210 589.300 214 586 214.500 583.300 213.300 580 210 577.300 209 574 205 571 206 569.300 205.700 571 208 572.300 209 569.500 211 569.300 217 567.700 224.300 564 223.500 561.700 225.300 558 224.500 555 225 550 226 548.500 231 546.700 233.300 545 238 541.700 242.500 539 241 537.500 242.500 535 244.500 530 244 527.300 244 525 242 522.700 240.700 520.700 244 523 247.500 526 248.300 524 250 524.500 254 520 258.300 518 259 515.700 257.300 515.700 263.300 520 269 526.700 275 532 279.500 536 284 535.500 289 533 293.300 528 303 520 315 510 326.700 506 330 493.300 341.700 480 353.300 475 355 470 356.700 465 354.300 460 354 455 356 448.300 360.700 443 361 438.300 362.700 434 365.500 430 367.300 423 367 416.700 366.300 410 367 401.700 368.500 399 365 397.700 359.300 392 358.500 390.700 355.700 389 356.500 385 353.500 381.700 352.700 378 357 376.700 358.300 372 359.500 368.300 359 365 356.700 361.700 358.700 356 358.500 351.700 357.700 348.300 353.300 347.300 345 344 342.500 340 338.300 300 310 228 300 228 536 233.300 533.300 236 531 239 532 243.300 530 250 531.700 255 531 258.300 528.300 258 525 260 522 257.700 520.700 262 520.500 266.700 519 270 520.500 274 521 275 513.300 278 513 280 510 285 504.300 289 504 292.300 504.500 293.300 502.300 300 499 308.300 495.500 317 494.500 326.700 493.500 331 490 336.700 488 350 488 363.300 487.700 368 487 373.300 486.200 378 487.500 383.300 487.700 385 490.500 388.300 491.700 392 491.500 395.700 492.700 398 490 403 489 410 490 416 490.500 421.700 491.700 430 489.300 438.300 486.700 449 487.300 453.300 484.300 463.300 483.500 470.700 484.300 472 487 474 490.700 483 490.500 493.300 491.700 497 491.500 499.300 493 503 490 506.700 488.300 513 486.700 520 486 525 485.500 531.700 487.300 540 486.500 547 486.500 553 485 559.300 486.700 565 484.200 575 484.500 584.300 484.300 590 478.300 600 471 608 468 616.700 466 621.700 462.300 628 462.500 635 460 637.300 455.700 643 454.500 650 453.500 656 454.500 663.300 454.700 670 453.200 677 454.500 683.300 456 691.700 457.700 698 456 706.700 455.300 708.300 451.700 716 449 725 446.700 727.700 443.300 729 438 731.700 433.300 740 426 750 416.700 757.300 409.300 758 406 755.700 400 755 395 753.300 391 756 386 760 380.700 765 374 770 369.300 775 366.700 773 362 769.300 357.700 768.500 353 769 349.300 771 344 775 338.300 780 332.500 786.700 326.700 793.300 322.700 797 323.200 803 322 808.300 322.500 812 320.500 815 320 816 316.500 820 315 822 314 826 312z"/>
          <!-- trails, northern part -->
          <g fill="none" stroke="#2f8640" stroke-width="3" stroke-linejoin="round" transform="translate(500 165) scale(.33333)">
            <path d="M208 221L222 208 238 202 280 204 316 211 328 188 345 155 340 145 315 118 310 105 322 97 350 95 380 98 400 104 430 112 460 118 472 117 480 100 487 88 515 87 535 92 545 92 552 85 560 93 568 82 573 68 572 53 600 57 630 70 655 85 663 97 660 110 648 118 645 130 665 130"/>
            <path d="M573 55L573 80 590 98 612 103 618 105 630 135 650 140M290 130L305 127 310 108M400 104L440 118 465 125 480 117 500 118 510 128 520 130 535 146 555 147M645 118L668 125 668 132 648 130"/>
            <path d="M563 85L588 108 593 127 620 138 650 135 660 142 688 145 690 150 650 165 615 188 597 190 603 197 628 202 638 215 636 235 612 258 607 280 601 300 601 306"/>
            <path d="M593 127L565 133 555 145 545 163 523 169 490 202 460 235 465 239 492 242 496 231 503 242 530 265 552 308 547 320 525 342 480 350 445 356 443 364 430 360 365 370 348 385 346 407 335 417 345 430 346 462 328 480 315 510 297 530 290 550 265 567 260 590 240 612 200 627"/>
            <path d="M547 320L560 318 580 307 601 306 625 310 640 316 690 325 712 337 728 360 765 380 800 402 800 408 765 415 765 422 785 445 805 467 812 487 830 507 815 502 796 493 775 497 787 510 782 514 765 512 720 520 680 517 672 527 673 542 687 560"/>
            <path d="M346 462L368 480 370 493 390 508 425 532 432 548 448 554M58 502L62 512 85 545 100 570 118 605 135 620 165 629 200 628 220 608 240 590 244 565 235 548 222 543 195 548 175 543 172 530 168 512 161 498"/>
          </g>
          <!-- western trails -->
          <g fill="none" stroke="#2f8640" stroke-width="3" stroke-linejoin="round" transform="translate(230 330) scale(.33333)">
            <path d="M327 142L345 146 358 155 365 169 380 164 400 162 428 160 455 164 461 177 468 173 495 179 518 206 545 216 549 227 564 214 602 240 630 241 636 222 640 217 680 213 730 203 736 210 745 203 743 195 765 185 775 163 785 163 798 187 808 176 845 165 845 158 865 163 881 178 890 168 908 164 907 150 915 160 935 158 925 152 950 143 990 140M329 142L329 176"/>
            <path d="M602 240L605 222 632 190 614 138 650 146 638 127 650 132 652 120 660 125 658 115 670 113 700 93 722 89 733 91 735 83"/>
            <path d="M327 246L350 236 372 233 368 250 410 253 430 259 452 272 452 282 468 292 468 318 450 343 465 349 482 362 492 362 500 376 515 382 538 376 540 361 548 368 590 376 620 358 629 345 608 318 609 285 625 262 640 257 628 262 610 256M370 250L362 253 358 290 348 320 334 350M487 360L482 372 473 380M515 382L524 398"/>
            <path d="M625 240L610 250 625 247 650 258 648 263 630 262 672 268 700 290 718 264 733 267 745 263 775 271 803 276 830 257 870 233 920 207 936 185 935 155"/>
            <path d="M830 257L832 272 845 287 848 300 862 310 866 322 882 327 886 345 900 365 902 380 918 397 930 413 933 428M106 475L128 476 135 490 150 495 158 493 161 501M8 556L25 551 50 537 72 550 100 548 123 562"/>
          </g>
          <!-- south-eastern trails -->
          <g fill="none" stroke="#2f8640" stroke-width="3" stroke-linejoin="round" transform="translate(520 310) scale(.33333)">
            <path d="M103 195H141V206M103 201H141M103 195V206M65 215L78 205 103 202M65 218L80 210 103 206 140 206 148 207 158 222 180 226 215 224 235 240 250 242 262 255 285 285 320 318 348 338 375 347 405 353 419 370"/>
            <path d="M105 205L110 228 122 258 135 295 134 312 147 325 156 345 150 355 125 370 140 378 146 405 136 430 143 441 165 430 170 410 180 410 185 400 208 388 220 368 232 370 230 395 240 404 250 388 258 408 264 390 245 360 240 332 225 322 208 316 225 312 222 302 207 284 185 285 177 262 158 235 158 222"/>
          </g>
        </svg>
      </main>

      <!-- processing toolbox -->
      <aside class="w-[296px] shrink-0 flex">
        <div class="w-[6px] flex items-center justify-center"><span class="h-4 border-l border-dotted border-[#b5b1ad]"></span></div>
        <div class="w-[289px] flex flex-col">
          <div class="h-[22px] pl-1 flex items-center">
            <span class="flex-1">Processing Toolbox</span>
            <svg class="size-[11px] mr-[3px]" viewBox="0 0 11 11"><rect x=".5" y=".5" width="10" height="10" rx="1.500" fill="none" stroke="#555"/><path d="M4.500 2.500h4v4h-4zM2.500 4.500h4v4h-4z" fill="#efebe7" stroke="#555"/></svg>
            <svg class="size-[11px] mr-px" viewBox="0 0 11 11"><rect x=".5" y=".5" width="10" height="10" rx="1.500" fill="none" stroke="#555"/><path d="M3 3l5 5M8 3l-5 5" stroke="#444" stroke-width="1.700"/></svg>
          </div>
          <div class="h-[29px] pb-[3px] pl-[7px] flex items-center gap-[7px]">
            <svg class="size-[18px]"><use href="#gearsR"/></svg>
            <svg class="size-[18px]"><use href="#pyS"/></svg>
            <svg class="ml-px size-4"><use href="#clock"/></svg>
            <svg class="ml-[2px] size-4"><use href="#doc"/></svg>
            <svg class="ml-[2px] size-4"><use href="#wrench"/></svg>
          </div>
          <div class="h-[22px] shrink-0 bg-white border border-[#aaa7a3] rounded-[3px] flex items-center pl-2 text-[#7d7d7d]"><svg class="w-[13px] h-[13px] mr-[8px]"><use href="#search"/></svg>Search...</div>
          <div class="h-[359px] shrink-0 flex overflow-hidden bg-white border border-[#b1aeaa]">
            <div id="toolbox" class="flex-1 overflow-hidden -mt-[1px]"></div>
            <div class="w-[14px] flex flex-col border-l border-[#c3c0bc] bg-[#e6e3e0]">
              <div class="h-[14px] border-b border-[#b9b6b2] bg-[#f5f3f1] flex items-center justify-center"><svg class="w-2 h-[5px]" viewBox="0 0 8 5"><path d="M0 4.700h8L4 .4z" fill="#444"/></svg></div>
              <div class="h-[289px] bg-linear-to-r from-[#fbfaf9] to-[#f1efed] border-b border-[#b9b6b2]"></div>
              <div class="h-[40px] border-b border-[#b9b6b2]"></div>
              <div class="flex-1 bg-[#f5f3f1] flex items-center justify-center"><svg class="w-2 h-[5px]" viewBox="0 0 8 5"><path d="M0 .3h8L4 4.600z" fill="#444"/></svg></div>
            </div>
          </div>
        </div>
      </aside>
    </div>

    <!-- status bar -->
    <footer class="h-[27px] shrink-0 flex items-center">
      <div class="ml-1 w-[220px] h-[22px] bg-white border border-[#aaa7a3] rounded-[3px] flex items-center pl-2 text-[#7d7d7d]"><svg class="w-[13px] h-[13px] mr-[8px]"><use href="#search"/></svg>Type to locate (Ctrl+K)</div>
      <div class="ml-[36px] w-[44px] overflow-hidden flex justify-center"><span class="shrink-0">Coordinate</span></div>
      <div class="ml-[4px] w-[121px] h-[22px] bg-white border border-[#aaa7a3] rounded-[3px] pl-1 leading-5">6052127,1822382</div>
      <svg class="ml-[4px] size-4"><use href="#mouse"/></svg>
      <div class="ml-[12px] w-[17px] overflow-hidden flex justify-center"><span class="shrink-0">Scale</span></div>
      <div class="ml-[2px] w-[93px] h-[22px] bg-white border border-[#aaa7a3] rounded-[3px] pl-1 leading-5 flex overflow-hidden"><span class="flex-1">1:89552</span><span class="w-[19px] border-l border-[#c3c0bc] bg-linear-to-b from-[#fbfaf9] to-[#eae7e4] flex items-center justify-center"><svg class="w-2 h-[5px]" viewBox="0 0 8 5"><path d="M0 .3h8L4 4.600z" fill="#555"/></svg></span></div>
      <svg class="ml-[6px] w-3 h-4"><use href="#lock"/></svg>
      <div class="ml-[15px] w-[36px] overflow-hidden flex justify-center"><span class="shrink-0">Magnifier</span></div>
      <div class="ml-[2px] w-[95px] h-[22px] bg-white border border-[#aaa7a3] rounded-[3px] pl-[5px] leading-5 flex overflow-hidden"><span class="flex-1">100%</span><span class="w-[14px] border-l border-[#c3c0bc] bg-[#f5f3f1] flex flex-col items-center justify-center gap-[5px]"><svg class="w-2 h-[5px]" viewBox="0 0 8 5"><path d="M0 4.700h8L4 .4z" fill="#555"/></svg><svg class="w-2 h-[5px]" viewBox="0 0 8 5"><path d="M0 .3h8L4 4.600z" fill="#555"/></svg></span></div>
      <div class="ml-[9px] w-[29px] overflow-hidden flex justify-center"><span class="shrink-0">Rotation</span></div>
      <div class="ml-[10px] w-[91px] h-[22px] bg-white border border-[#aaa7a3] rounded-[3px] pl-1 leading-5 flex overflow-hidden"><span class="flex-1">0.0 °</span><span class="w-[14px] border-l border-[#c3c0bc] bg-[#f5f3f1] flex flex-col items-center justify-center gap-[5px]"><svg class="w-2 h-[5px]" viewBox="0 0 8 5"><path d="M0 4.700h8L4 .4z" fill="#555"/></svg><svg class="w-2 h-[5px]" viewBox="0 0 8 5"><path d="M0 .3h8L4 4.600z" fill="#555"/></svg></span></div>
      <span class="ml-[6px] size-[14px] bg-white border border-[#aaa7a3] flex items-center justify-center"><svg class="size-[9px]" viewBox="0 0 9 9"><path d="M1 4.500l2.500 3.500L8 .5" stroke="#000" stroke-width="1.800" fill="none"/></svg></span>
      <span class="ml-[5px] w-[61px]">Render</span>
      <svg class="size-4"><use href="#crs"/></svg>
      <span class="ml-[4px] w-[87px]">EPSG:2229</span>
      <svg class="size-[17px]"><use href="#balloon"/></svg>
      <svg class="ml-[17px] mt-3 size-[12px]" viewBox="0 0 12 12"><path d="M1 11h2M4 11h2M7 11h2M10 11h2M4 8h2M7 8h2M10 8h2M7 5h2M10 5h2M10 2h2" stroke="#bdb9b5" stroke-width="1.300" stroke-dasharray="1.200 1"/></svg>
    </footer>
  </div>
</div>

<!-- layer context menu -->
<div id="context" class="absolute left-[82px] top-[126px] w-[257px] h-[362px] bg-white outline outline-1 -outline-offset-1 outline-[#8f8d8a]"></div>

<script>
const $ = id => document.getElementById(id);
const mn = s => s.replace(/_(.)/, '<span class="underline underline-offset-2">$1</span>');

$('menubar').innerHTML = ['Pro_ject','_Edit','_View','_Layer','_Settings','_Plugins','Vect_or','_Raster','_Database','_Web','Pro_cessing','_Help']
  .map(s => `<span>${mn(s)}</span>`).join('');

const handle = `<svg class="w-4 h-[18px] shrink-0" viewBox="0 0 16 18"><path d="M6.500 0v18M9.500 1v18" stroke="#bbb7b3" stroke-dasharray="1 2" fill="none"/></svg>`;
const arrow = c => `<span class="w-3 shrink-0 flex"><svg class="w-[9px] h-[5px]" viewBox="0 0 9 5"><path d="M0 0h9L4.500 5z" fill="${c}"/></svg></span>`;
function bar(id, items) {
  $(id).innerHTML = items.split(' ').map(n => {
    if (n === '|') return handle;
    if (n === 'v') return arrow('#3b3b3b');
    if (n === 'w') return arrow('#bdbbb9');
    const on = n[0] === '*';
    const svg = `<svg class="size-6"><use href="#${on ? n.slice(1) : n}"/></svg>`;
    return on
      ? `<span class="w-[33px] shrink-0 flex justify-center"><span class="w-8 h-[31px] shrink-0 rounded-[3px] border border-[#b3b0ac] bg-[#dcd9d6] flex items-center justify-center">${svg}</span></span>`
      : `<span class="w-[33px] shrink-0 flex justify-center">${svg}</span>`;
  }).join('');
}
bar('tb1', '| new open save saveas layout layman | *hand pan zin zout z11 zfull zsel zlay zlast znext map1 bmnew bm refresh | info gearact w select v selform v desel table abacus *gear sigma ruler v');
bar('tb2', '| dsm gpkgn shp spl chip | pens pen saveG shpG vertex multi trash cut copy paste undo redo | abc diag abbox ab abeye abmove abrot abedit | gl1 gl2 gl3 | pycon | book |');
bar('tb3', '| osm1 osm2');
['tb1','tb2','tb3'].forEach(id => $(id).firstElementChild.classList.add('-ml-[4px]'));
$('tb1').insertAdjacentHTML('beforeend', `<svg class="ml-[22px] w-[8px] h-[7px]" viewBox="0 0 8 7"><path d="M.5.5l3 3-3 3M4.500.5l3 3-3 3" stroke="#000" stroke-width="1.500" fill="none"/></svg>`);

const tri = `<svg class="w-[5px] h-[9px]" viewBox="0 0 5 9"><path d="M0 0l5 4.500L0 9z" fill="#3b3b3b"/></svg>`;
$('browser').innerHTML = [['star','Favorites'],['proj','Project Home',1],['folder','Home',1],['folder','/',1],['gpkg','GeoPackage',1],['feather','SpatiaLite'],['pg','PostGIS'],['mssql','MSSQL'],['db2','DB2'],['wms','WMS/WMTS'],['wms','XYZ Tiles'],['wcs','WCS'],['wfs','WFS']]
  .map(([i, t, k]) => `<div class="h-4 flex items-center whitespace-nowrap"><span class="w-[23px] pl-[7px]">${k ? tri : ''}</span><svg class="size-4 mr-[6px]"><use href="#${i}"/></svg>${t}</div>`).join('');

const groups = ['Cartography','Database','File tools','Graphics','Interpolation','Layer tools','Network analysis','Raster analysis','Raster terrain analysis','Raster tools','Vector analysis','Vector creation','Vector general','Vector geometry','Vector overlay','Vector selection','Vector table'];
$('toolbox').innerHTML =
  `<div class="h-[15px] flex items-center pl-[5px]"><svg class="w-[9px] h-[5px] mr-[9px]" viewBox="0 0 9 5"><path d="M0 0h9L4.500 5z" fill="#3b3b3b"/></svg>Recently used</div>` +
  [['multip','Multipart to singleparts'],['gear','Import geotagged photos']].map(([i, t]) => `<div class="h-4 flex items-center pl-[43px]"><svg class="size-[15px] mr-[7px]"><use href="#${i}"/></svg>${t}</div>`).join('') +
  groups.map(t => `<div class="h-4 flex items-center pl-[7px]">${tri}<svg class="size-[15px] ml-[10px] mr-[6px]"><use href="#q"/></svg>${t}</div>`).join('') +
  [['gdal','GDAL'],['grass','GRASS'],['gearsR','Models']].map(([i, t]) => `<div class="h-4 flex items-center pl-[7px]">${tri}<svg class="size-4 ml-[10px] mr-[7px]"><use href="#${i}"/></svg>${t}</div>`).join('');

const items = [['_Zoom to Layer','zlay'],['_Zoom to Selection','zlay','off'],['_Show in Overview','glasses'],['Show Feature Count','box'],['Copy Layer'],['Re_name Layer'],0,['_Duplicate Layer','dup'],['_Remove Layer…','rem'],0,['_Open Attribute Table','tblw','on'],['Toggle Editing','pen'],['_Filter…'],0,['_Set Layer Scale Visibility…'],['Set CRS',,'sub'],0,['Export',,'sub'],0,['Styles',,'sub'],['_Properties…']];
const tone = { off: 'text-[#bebebe]', on: 'bg-[#308cc6] text-white border-y border-[#2a7bae]' };
$('context').innerHTML = items.map(r => {
  if (!r) return '<div class="h-[2px] mx-[5px] border-t border-[#bab7b4]"></div>';
  const [t, i, s] = r;
  const icon = i === 'box' ? '<span class="block size-[14px] border border-[#bbb]"></span>' : i ? `<svg class="${s === 'off' ? 'size-4 opacity-40' : 'size-4'}"><use href="#${i}"/></svg>` : '';
  return `<div class="h-[22px] flex items-center pl-[6px] ${tone[s] || ''}"><span class="w-[21px]">${icon}</span><span class="flex-1">${mn(t)}</span>${s === 'sub' ? `<span class="mr-[5px]">${tri}</span>` : ''}</div>`;
}).join('');
</script>
</body>
</html>
